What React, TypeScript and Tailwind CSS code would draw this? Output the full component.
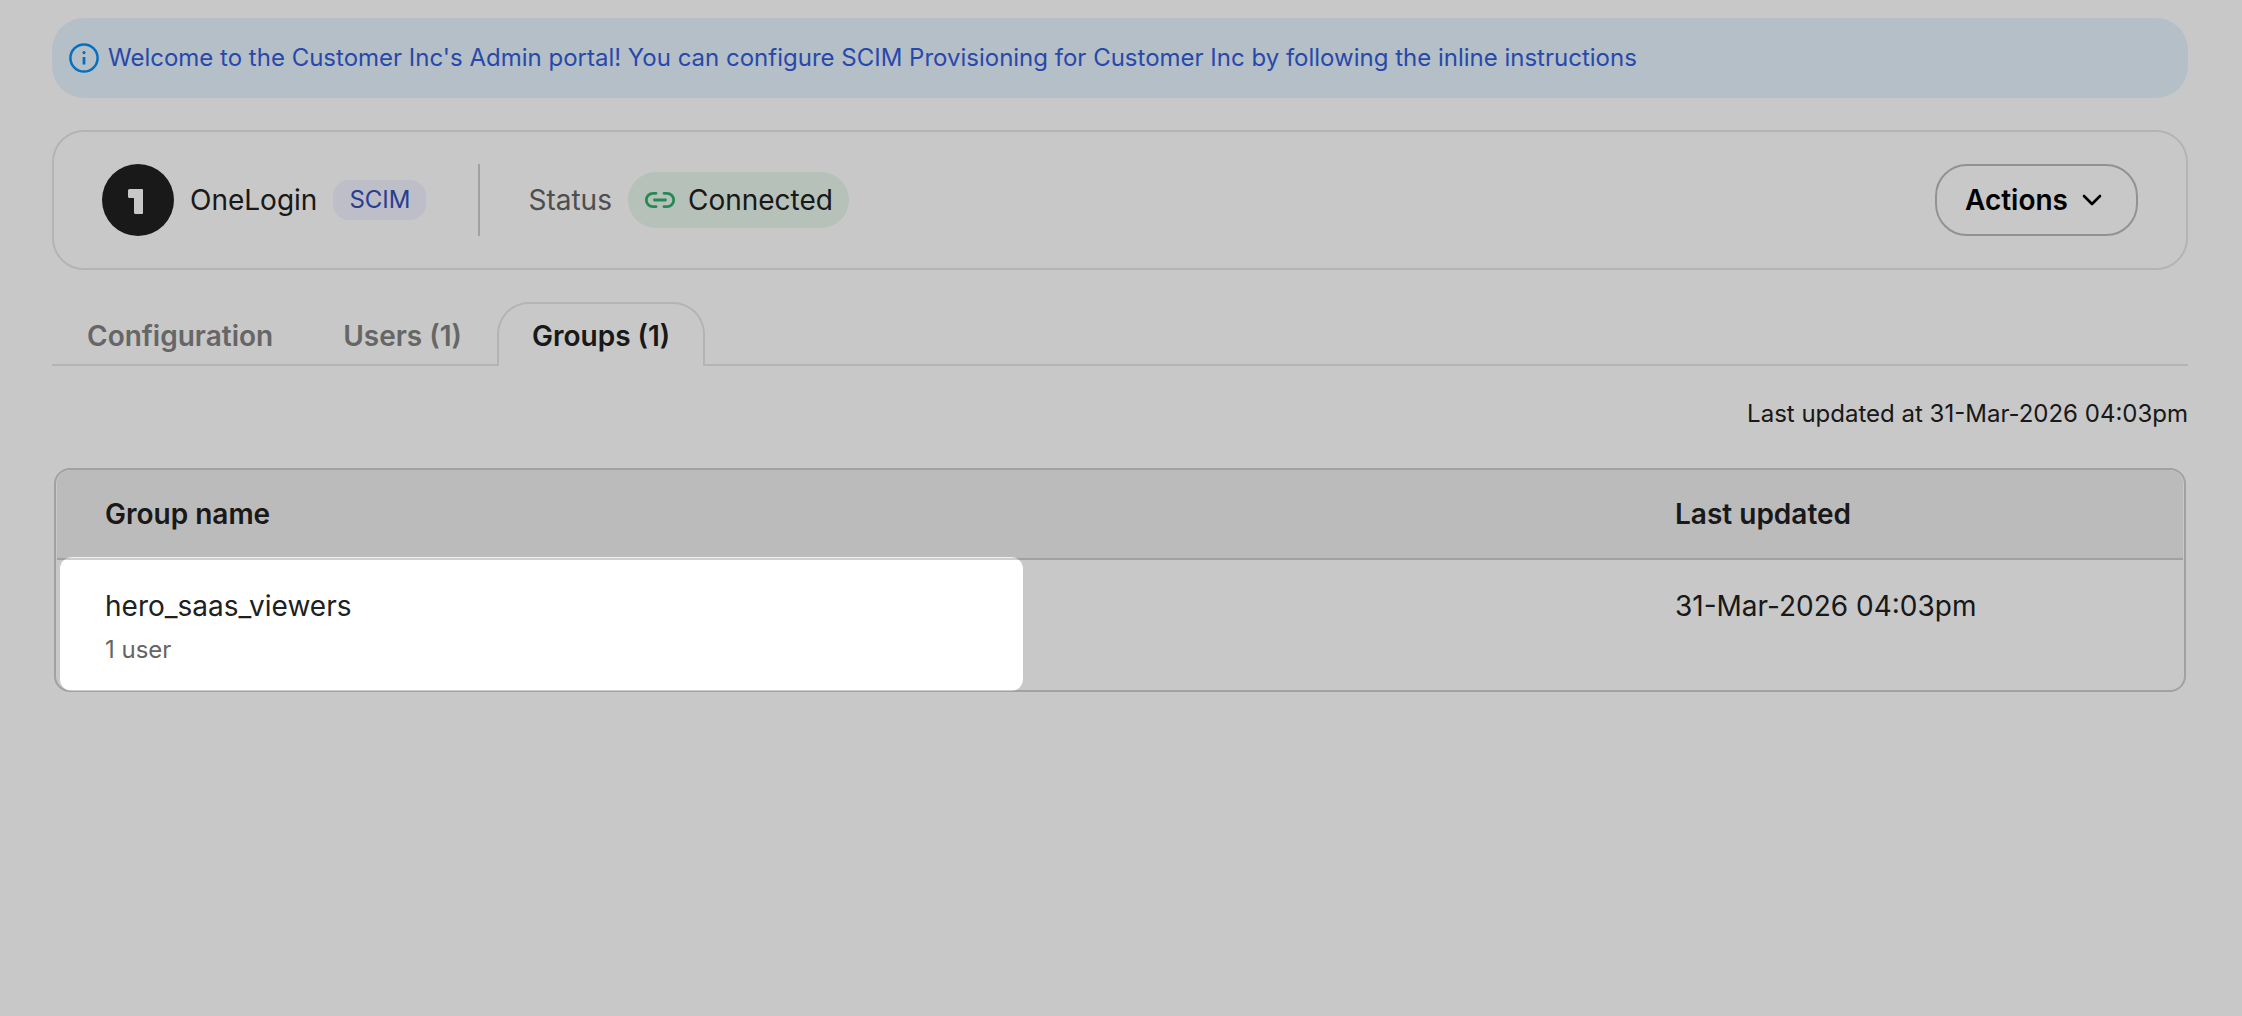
import { useState } from "react"

const tabs = ["Configuration", "Users (1)", "Groups (1)"]

const groups = [
    { name: "hero_saas_viewers", members: "1 user", updated: "31-Mar-2026 04:03pm" },
]

function InfoIcon() {
    return (
        <svg className="size-8 shrink-0 text-[#088ff5]" viewBox="0 0 32 32" fill="none" stroke="currentColor" strokeWidth="2.5">
            <circle cx="16" cy="16" r="13.6" />
            <path d="M16 15v7.500" strokeWidth="2.8" />
            <circle cx="16" cy="10.6" r="1.6" fill="currentColor" stroke="none" />
        </svg>
    )
}

function OneLoginLogo() {
    return (
        <svg className="size-18 shrink-0" viewBox="0 0 72 72">
            <circle cx="36" cy="36" r="36" fill="#202020" />
            <path
                d="M27.5 25H40a1 1 0 0 1 1 1v23a1 1 0 0 1-1 1h-6.500a1.500 1.500 0 0 1-1.500-1.500V34h-4.500A1.500 1.500 0 0 1 26 32.500v-6A1.500 1.500 0 0 1 27.500 25z"
                fill="#fff"
            />
        </svg>
    )
}

function LinkIcon() {
    return (
        <svg className="size-8 shrink-0 text-[#34ae6c]" viewBox="0 0 32 32" fill="none" stroke="currentColor" strokeWidth="2.8" strokeLinecap="round">
            <path d="M12 9.300H9a6.700 6.700 0 0 0 0 13.400h3" />
            <path d="M20 9.300h3a6.700 6.700 0 0 1 0 13.400h-3" />
            <path d="M10.500 16h11" />
        </svg>
    )
}

function ChevronIcon() {
    return (
        <svg className="size-8 shrink-0" viewBox="0 0 32 32" fill="none" stroke="currentColor" strokeWidth="2.600" strokeLinecap="round" strokeLinejoin="round">
            <path d="M8 12l8 8 8-8" />
        </svg>
    )
}

export default function App() {

    const [activeTab, setActiveTab] = useState("Groups (1)")

    return (
        <main className="min-h-screen overflow-hidden bg-white pt-[18px] pr-[54px] pl-[52px] font-['Inter',sans-serif] text-[28px] leading-[40px] text-[#202020]">

            <div className="flex items-center gap-2 rounded-4xl bg-[#e6f4ff] px-4 py-6 text-2xl text-[#335cdb]">
                <InfoIcon />
                <p>Welcome to the Customer Inc's Admin portal! You can configure SCIM Provisioning for Customer Inc by following the inline instructions</p>
            </div>


            <section className="mt-8 flex items-center justify-between rounded-4xl border-2 border-[#e6e6e6] px-12 py-8">
                <div className="flex items-center">
                    <div className="flex items-center gap-4">
                        <OneLoginLogo />
                        <p>OneLogin</p>
                        <span className="rounded-2xl bg-[#f1f2ff] px-4 py-1 text-2xl leading-8 text-[#3350b8]">SCIM</span>
                    </div>

                    <div className="mr-12 ml-13 h-18 w-0.5 bg-[#cecece]" />

                    <div className="flex items-center gap-4">
                        <p className="text-[#646464]">Status</p>
                        <p className="flex items-center gap-3 rounded-full bg-[#e8f6ed] px-4 py-2">
                            <LinkIcon />
                            Connected
                        </p>
                    </div>
                </div>

                <button className="flex h-18 items-center gap-2 rounded-4xl border-2 border-[#bbbbbb] px-7 font-semibold text-black">
                    Actions
                    <ChevronIcon />
                </button>
            </section>


            <div role="tablist" className="mt-8 flex h-16 font-semibold">
                {
                    tabs.map(tab => (
                        <button
                            key={tab}
                            role="tab"
                            aria-selected={tab === activeTab}
                            onClick={() => setActiveTab(tab)}
                            className={tab === activeTab
                                ? "rounded-t-4xl border-2 border-b-0 border-[#e6e6e6] px-[33px] pt-0.5"
                                : "border-b-2 border-[#e6e6e6] px-[35px] pt-1.5 text-[#838383]"}
                        >
                            {tab}
                        </button>
                    ))
                }
                <div className="flex-1 border-b-2 border-[#e6e6e6]" />
            </div>


            <p className="mt-8 text-right text-2xl">Last updated at 31-Mar-2026 04:03pm</p>


            <div className="mx-0.5 mt-[38px] rounded-2xl border-2 border-[#cecece] px-px">
                <table className="w-full table-fixed border-separate border-spacing-0 text-left">
                    <thead>
                        <tr className="h-[90px]">
                            <th className="rounded-tl-[14px] border-b-2 border-[#cecece] bg-[#efefef] px-12 font-semibold">Group name</th>
                            <th className="w-[556px] rounded-tr-[14px] border-b-2 border-[#cecece] bg-[#efefef] px-12 font-semibold">Last updated</th>
                        </tr>
                    </thead>
                    <tbody>
                        {
                            groups.map(group => (
                                <tr key={group.name} className="align-top leading-[44px]">
                                    <td className="relative px-12 py-6">
                                        <p>{group.name}</p>
                                        <p className="mt-1.5 text-2xl leading-8 text-[#646464]">{group.members}</p>

                                        {/* spotlight, its shadow dims the rest of the page */}
                                        <div className="pointer-events-none absolute -top-[3px] -bottom-px left-[3px] w-[963px] rounded-xl shadow-[0_0_0_2400px_rgba(0,0,0,0.216)]" />
                                    </td>
                                    <td className="px-12 py-6">{group.updated}</td>
                                </tr>
                            ))
                        }
                    </tbody>
                </table>
            </div>
        </main>
    )
}
